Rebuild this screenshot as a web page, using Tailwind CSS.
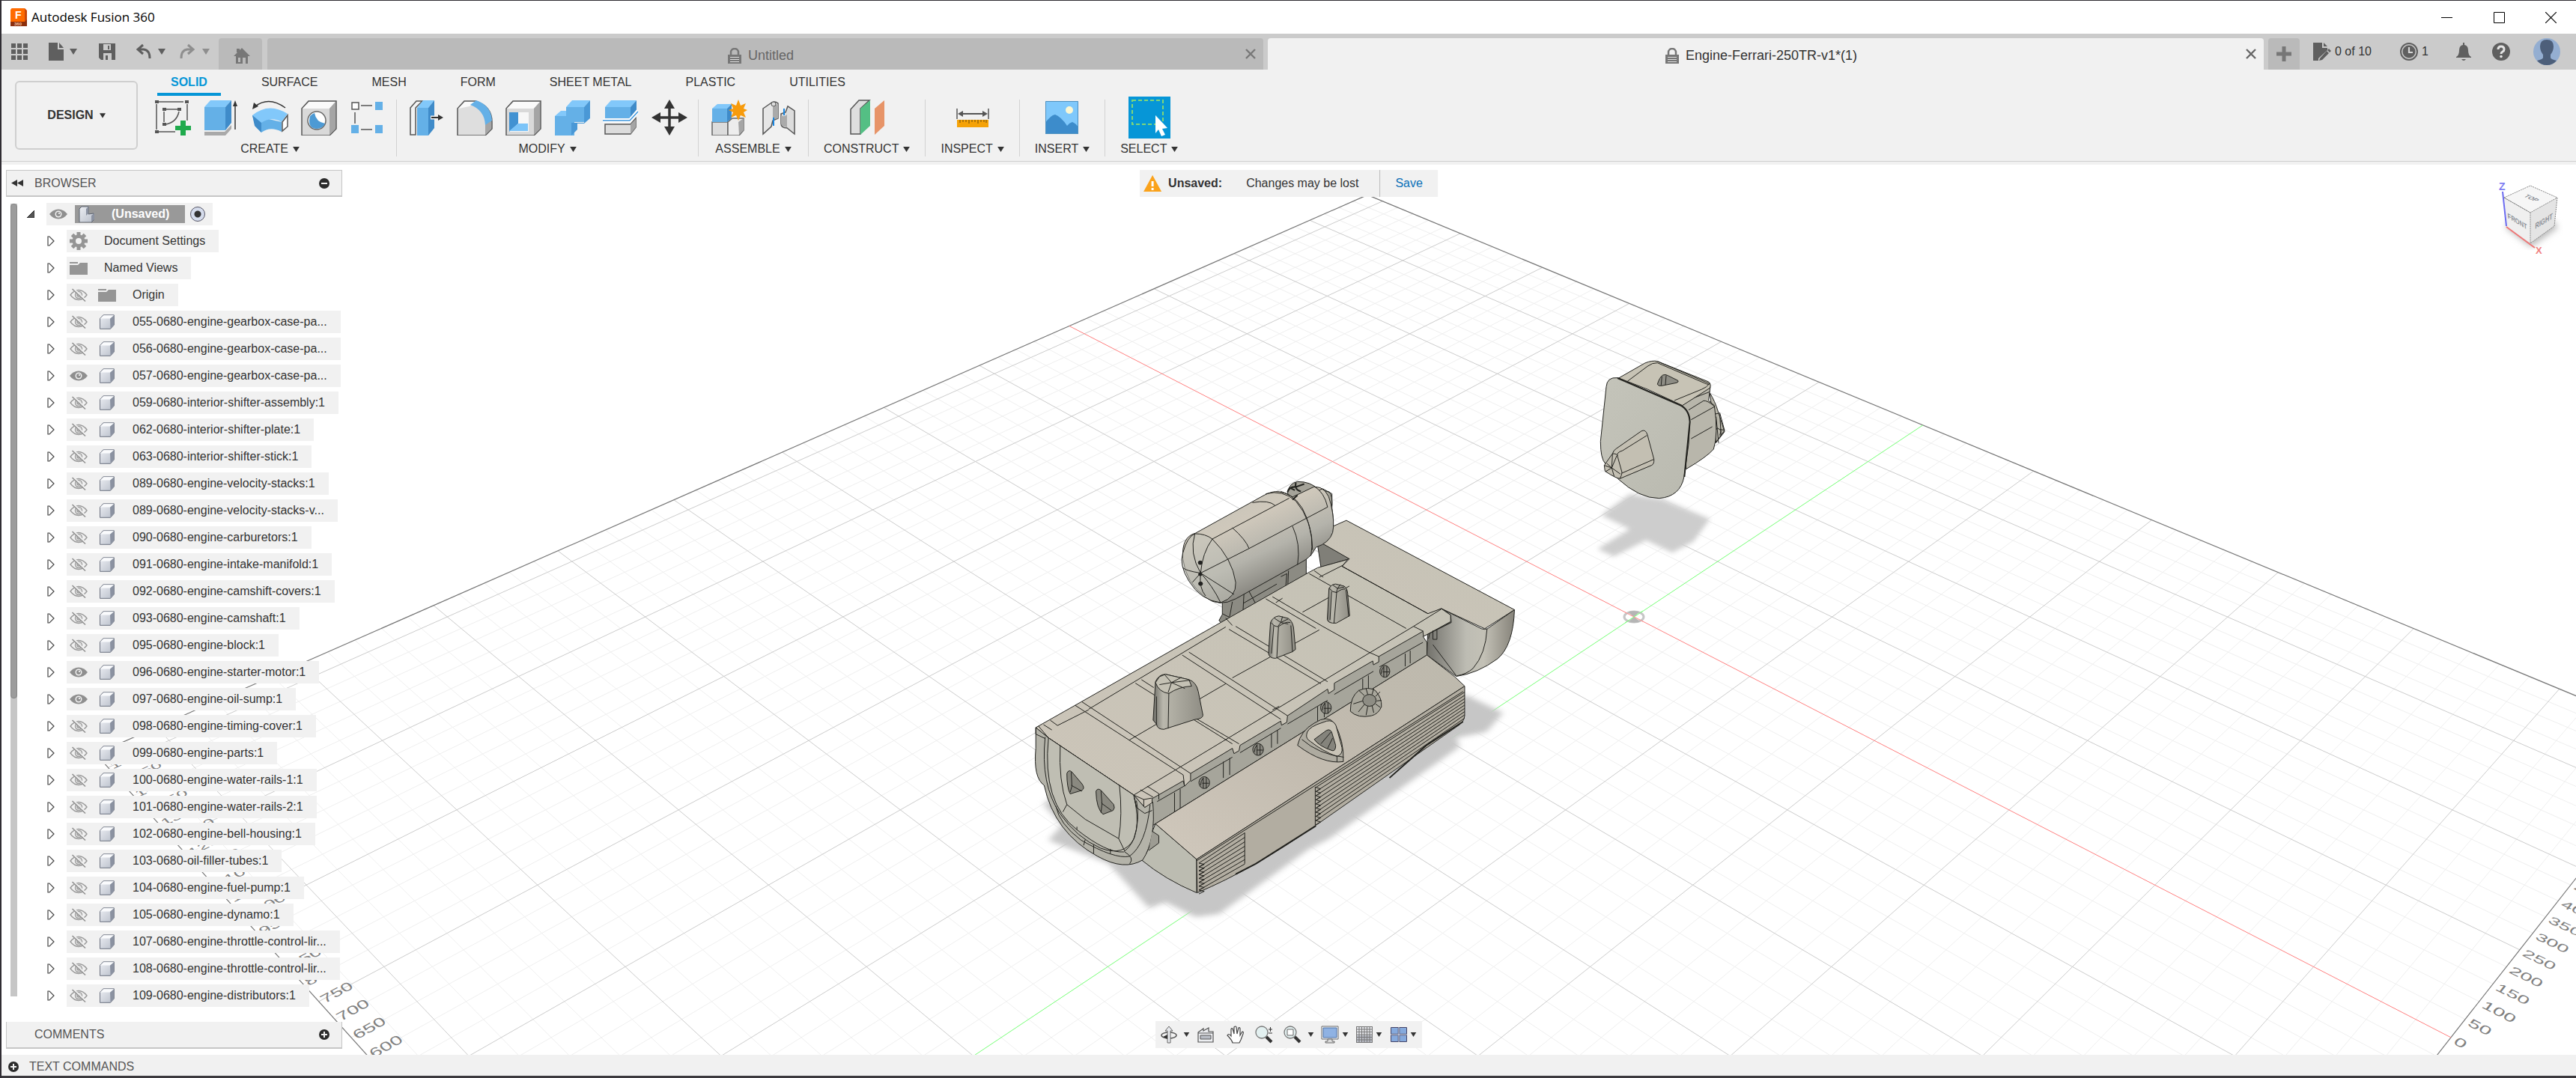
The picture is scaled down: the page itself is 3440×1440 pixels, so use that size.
<!DOCTYPE html>
<html lang="en">
<head>
  <meta charset="UTF-8" />
  <meta name="viewport" content="width=device-width, initial-scale=1" />
  <title>Autodesk Fusion 360</title>
  <script src="https://cdn.jsdelivr.net/npm/@tailwindcss/browser@4"></script>
  <style>
    body {
      font-family: 'Liberation Sans', Arial, sans-serif;
    }
    .title-font {
      font-family: 'Open Sans', 'Noto Sans', sans-serif;
    }
    .ln {
      fill: none;
      stroke: #23231f;
      stroke-width: 1;
    }
    .ln, .ln * {
      vector-effect: non-scaling-stroke;
    }
  </style>
</head>
<body class="h-screen flex flex-col overflow-hidden bg-white text-base text-[#333] border-t border-l-2 border-[#302d33]">

  <!-- shared icons -->
  <svg class="absolute w-0 h-0" aria-hidden="true">
    <defs>
      <linearGradient id="cubeGrad" x1="0" y1="0" x2="1" y2="1">
        <stop offset="0" stop-color="#eceef3" /><stop offset="1" stop-color="#b9bfca" />
      </linearGradient>
      <symbol id="i-caret" viewBox="0 0 10 8"><path d="M0 0h10L5 8z" fill="currentColor" /></symbol>
      <symbol id="i-eye" viewBox="0 0 24 14">
        <path d="M0 7Q5 .5 12 .5T24 7Q19 13.500 12 13.500T0 7z" fill="#8f8f8f" />
        <circle cx="12" cy="7" r="4.500" fill="#f1f1f1" /><circle cx="12" cy="7" r="3" fill="#8f8f8f" /><circle cx="13" cy="6" r="1" fill="#fff" />
      </symbol>
      <symbol id="i-eye-off" viewBox="0 0 24 18">
        <g fill="none" stroke="#9b9b9b" stroke-width="1.400">
          <path d="M1 9Q6 2.500 12 2.500T23 9Q18 15.500 12 15.500T1 9z" />
          <circle cx="12" cy="9" r="4.500" /><circle cx="12" cy="9" r="2" />
        </g>
        <path d="M4 0L22 17" stroke="#f1f1f1" stroke-width="3" /><path d="M3.500 1L21 17.500" stroke="#8f8f8f" stroke-width="1.500" />
      </symbol>
      <symbol id="i-cube" viewBox="0 0 20 20">
        <path d="M.5 5.500Q1 4.500 5 .8H19.300V14L14.500 19.300H.5z" fill="url(#cubeGrad)" stroke="#6c7280" />
        <path d="M14 5.500L19 1V14L14.500 19z" fill="#8b92a1" /><path d="M1 5.500L5.500 1.200H19L14 5.500z" fill="#fafbfd" />
      </symbol>
      <symbol id="i-folder" viewBox="0 0 24 17"><path d="M0 0h11v2H0zM0 4h11l3-3h10v16H0z" fill="#959595" /></symbol>
      <symbol id="i-gear" viewBox="-12 -12 24 24">
        <g fill="#959595">
          <g id="teeth"><rect x="-2.500" y="-12" width="5" height="24" /><rect x="-12" y="-2.500" width="24" height="5" /></g>
          <use href="#teeth" transform="rotate(45)" /><circle r="8.500" />
        </g>
        <circle r="4" fill="#f1f1f1" />
      </symbol>
      <symbol id="i-tri" viewBox="0 0 10 14"><path d="M1 1h2l6 6-6 6H1z" fill="#fff" stroke="#444" stroke-width="1.200" /></symbol>
      <symbol id="i-lock" viewBox="0 0 18 21">
        <path d="M4 9V6a5 5 0 0 1 10 0v3" fill="none" stroke="currentColor" stroke-width="2.500" />
        <rect y="9" width="18" height="12" fill="currentColor" /><path d="M3 12.500h12M3 15.500h12M3 18.500h12" stroke="#ddd" />
      </symbol>
      <symbol id="i-plus" viewBox="0 0 14 14"><circle cx="7" cy="7" r="7" fill="#2b2b2b" /><path d="M3 7h8M7 3v8" stroke="#f1f1f1" stroke-width="2" /></symbol>
      <symbol id="i-minus" viewBox="0 0 14 14"><circle cx="7" cy="7" r="7" fill="#2b2b2b" /><path d="M3 7h8" stroke="#f1f1f1" stroke-width="2" /></symbol>
      <symbol id="i-x" viewBox="0 0 14 14"><path d="M1 1l12 12M13 1L1 13" stroke="currentColor" stroke-width="2.400" /></symbol>
    </defs>
  </svg>

  <!-- title bar -->
  <header class="h-11 shrink-0 flex items-center bg-white">
    <svg class="ml-3 w-[22px] h-6" viewBox="0 0 22 24">
      <path d="M2 0h17l3 3v21H0V3z" fill="#c9480a" /><path d="M2 0h17v18H0V2z" fill="#ff6b00" /><path d="M0 18h19l3-3v9H0z" fill="#8c2f0d" />
      <text x="6" y="14" font-size="14" font-weight="bold" fill="#fff">F</text><text x="5" y="23" font-size="6" font-weight="bold" fill="#f3c4a8">360</text>
    </svg>
    <h1 class="title-font ml-[6px] text-[17px] leading-6 text-black">Autodesk Fusion 360</h1>
    <div class="ml-auto flex">
      <button aria-label="Minimize" class="w-[70px] h-11 grid place-items-center"><svg class="w-[15px] h-[15px]" viewBox="0 0 15 15"><path d="M0 7.500h15" stroke="#000" /></svg></button>
      <button aria-label="Maximize" class="w-[70px] h-11 grid place-items-center"><svg class="w-[15px] h-[15px]" viewBox="0 0 15 15"><path d="M.5 .5h14v14H.5z" fill="none" stroke="#000" /></svg></button>
      <button aria-label="Close" class="w-[68px] h-11 grid place-items-center"><svg class="w-[15px] h-[15px]" viewBox="0 0 15 15"><path d="M0 0l15 15M15 0L0 15" stroke="#000" stroke-width="1.200" /></svg></button>
    </div>
  </header>

  <!-- document tabs -->
  <nav class="h-12 shrink-0 flex items-end bg-[#cbcbcb] text-[#5f5f5f]">
    <div class="h-12 w-[290px] shrink-0 flex items-center pl-[13px]">
      <button aria-label="Data panel"><svg class="w-[22px] h-[22px]" viewBox="0 0 22 22"><path d="M0 0h6v6H0zM8 0h6v6H8zM16 0h6v6h-6zM0 8h6v6H0zM8 8h6v6H8zM16 8h6v6h-6zM0 16h6v6H0zM8 16h6v6H8zM16 16h6v6h-6z" fill="currentColor" /></svg></button>
      <button aria-label="File" class="ml-7 flex items-center gap-2">
        <svg class="w-5 h-6" viewBox="0 0 20 24"><path d="M0 0h12v9h8v15H0zM14 0l6 7h-6z" fill="currentColor" /></svg>
        <svg class="w-[10px] h-2"><use href="#i-caret" /></svg>
      </button>
      <button aria-label="Save" class="ml-[29px]"><svg class="w-[22px] h-[22px]" viewBox="0 0 22 22"><path d="M0 0h22v22H3L0 19z" fill="currentColor" /><path d="M6 1h10v8H6zM6 13h11v9H6z" fill="#cbcbcb" /><path d="M12 3h2v5h-2zM9 16h3v6H9z" fill="currentColor" /></svg></button>
      <button aria-label="Undo" class="ml-7 flex items-center gap-2">
        <svg class="w-[21px] h-[22px]" viewBox="0 0 21 22"><path d="M9 2L2 8l7 6M2 8h8q8 1 8 12" fill="none" stroke="currentColor" stroke-width="3" /></svg>
        <svg class="w-[10px] h-2"><use href="#i-caret" /></svg>
      </button>
      <button aria-label="Redo" class="ml-[18px] flex items-center gap-[10px] text-[#8e8e8e]">
        <svg class="w-[21px] h-[22px]" viewBox="0 0 21 22"><path d="M12 2l7 6-7 6M19 8h-8q-8 1-8 12" fill="none" stroke="currentColor" stroke-width="3" /></svg>
        <svg class="w-[10px] h-2"><use href="#i-caret" /></svg>
      </button>
    </div>
    <button aria-label="Home" class="h-[42px] w-[58px] shrink-0 grid place-items-center rounded-t bg-[#bababa] pl-1 text-[#777]">
      <svg class="w-[22px] h-[22px] mt-1" viewBox="0 0 22 22"><path d="M11 1l11 11h-3v10H3V12H0zM4 2h4v5H4z" fill="currentColor" /><path d="M6 14h3v6H6zM12 14h4v8h-4z" fill="#bababa" /></svg>
    </button>
    <div class="ml-[7px] h-[42px] flex-1 flex items-center rounded-t bg-[#bababa] text-lg leading-6 text-[#666]">
      <button class="flex-1 flex items-center justify-center gap-[9px] pl-4 mt-1"><svg class="w-[18px] h-[21px] text-[#777]"><use href="#i-lock" /></svg>Untitled</button>
      <button aria-label="Close Untitled" class="mr-[6px] p-1 text-[#777]"><svg class="w-[14px] h-[14px]"><use href="#i-x" /></svg></button>
    </div>
    <div class="ml-[6px] h-[42px] flex-1 flex items-center rounded-t bg-[#f1f1f1] text-lg leading-6 text-[#333]">
      <button class="flex-1 flex items-center justify-center gap-[9px] pl-4 mt-1"><svg class="w-[18px] h-[21px] text-[#777]"><use href="#i-lock" /></svg>Engine-Ferrari-250TR-v1*(1)</button>
      <button aria-label="Close Engine-Ferrari-250TR-v1" class="mr-[6px] p-1 text-[#666]"><svg class="w-[14px] h-[14px]"><use href="#i-x" /></svg></button>
    </div>
    <button aria-label="New design" class="ml-[6px] h-[42px] w-[42px] shrink-0 grid place-items-center rounded-t bg-[#bababa]"><svg class="w-5 h-5" viewBox="0 0 20 20"><path d="M0 10h20M10 0v20" stroke="#777" stroke-width="5" /></svg></button>
    <div class="h-12 w-[369px] shrink-0 flex items-center pl-[18px] text-[#333]">
      <button class="w-[116px] flex items-center gap-[5px]">
        <svg class="w-6 h-6" viewBox="0 0 24 24"><path d="M0 0h12v7h7v3L7 21v3H0zM14 0l5 5h-5z" fill="#5f5f5f" /><path d="M9 21l9-10 3 3-9 9-4 1zM19 10l2-2 3 3-2 2z" fill="#5f5f5f" /></svg>0 of 10
      </button>
      <button class="w-[75px] flex items-center gap-[5px]">
        <svg class="w-6 h-6" viewBox="0 0 24 24"><circle cx="12" cy="12" r="11" fill="none" stroke="#5f5f5f" stroke-width="2" /><circle cx="12" cy="12" r="8.500" fill="#5f5f5f" /><path d="M12 6v7h5" fill="none" stroke="#d5d5d5" stroke-width="2.200" /></svg>1
      </button>
      <button aria-label="Notifications" class="w-12"><svg class="w-5 h-6" viewBox="0 0 20 24"><path d="M9 0h2v3q5 1 5 7 0 7 4 9v1H0v-1q4-2 4-9 0-6 5-7zM7 22h6q-3 4-6 0z" fill="#5f5f5f" /></svg></button>
      <button aria-label="Help" class="w-[55px]"><svg class="w-6 h-6" viewBox="0 0 24 24"><circle cx="12" cy="12" r="12" fill="#5f5f5f" /><path d="M8 9q0-4 4-4t4 4q0 2-2 3t-2 3" fill="none" stroke="#e4e4e4" stroke-width="3" /><circle cx="12" cy="18.500" r="1.800" fill="#e4e4e4" /></svg></button>
      <button aria-label="Account"><svg class="w-9 h-9" viewBox="0 0 36 36"><circle cx="18" cy="18" r="18" fill="#94aed1" /><path d="M18 2q9 0 9 9 0 6-4 11v4q0 2 8 4-5 6-13 6T5 30q8-2 8-4v-4Q9 17 9 11q0-9 9-9z" fill="#4d5f7a" /></svg></button>
    </div>
  </nav>

  <!-- ribbon -->
  <section class="h-[127px] shrink-0 flex bg-[#f1f1f1]">
    <div class="flex flex-1 h-[123px] border-b border-[#cfcfcf]">
      <button class="ml-[18px] mt-[15px] h-[92px] w-[164px] flex items-center justify-center gap-2 rounded-md border-2 border-[#cfcfcf] font-bold">DESIGN <svg class="w-2 h-[7px]"><use href="#i-caret" /></svg></button>
      <div class="ml-2">
        <div class="ml-[18px] h-[35px] flex gap-9">
          <button class="px-[18px] pt-[2px] border-b-4 border-[#0696d7] font-bold text-[#0696d7]">SOLID</button>
          <button class="px-[18px] pb-[2px]">SURFACE</button>
          <button class="px-[18px] pb-[2px]">MESH</button>
          <button class="px-[18px] pb-[2px]">FORM</button>
          <button class="px-[18px] pb-[2px]">SHEET METAL</button>
          <button class="px-[18px] pb-[2px]">PLASTIC</button>
          <button class="px-[18px] pb-[2px]">UTILITIES</button>
        </div>
        <div class="mt-[5px] h-[76px] flex divide-x divide-[#d2d2d2]">

          <div class="px-[6px] flex flex-col">
            <div class="flex">
              <button aria-label="Create sketch" class="w-[65px] grid place-items-center"><svg class="w-12 h-12" viewBox="0 0 48 48">
                <path d="M5 3h33M2 6v34M5 43h22M43 6v22M15 13h15M12 16v14M32 16q-3 14-17 17" fill="none" stroke="#555" stroke-width="1.500" />
                <path d="M0 1h5v4H0zM40 1h5v4h-5zM0 41h5v4H0zM10 11h5v4h-5zM30 11h5v4h-5zM10 31h5v4h-5z" fill="#555" />
                <path d="M34 28h7v7h7v6h-7v7h-7v-7h-7v-6h7z" fill="#1faa4c" /></svg></button>
              <button aria-label="Extrude" class="w-[65px] grid place-items-center"><svg class="w-12 h-12" viewBox="0 0 48 48">
                <path d="M1 43h27l9-9v5l-8 9H1z" fill="#a9a9a9" /><path d="M1 10h28v31H1z" fill="#64b0e7" /><path d="M1 10L9 1h28l-8 9z" fill="#82c8fa" /><path d="M29 10l8-9v30l-8 10z" fill="#3f8bc9" />
                <path d="M42 40V6" stroke="#333" stroke-width="1.500" /><path d="M42 1l3 8h-6z" fill="#333" /></svg></button>
              <button aria-label="Revolve" class="w-[65px] grid place-items-center"><svg class="w-12 h-12" viewBox="0 0 48 48">
                <path d="M0 21L4 36l8 8q12-9 27-1V30z" fill="#64b0e7" /><path d="M0 21Q22 3 47 19l-8 11q-14-8-27 1z" fill="#82c8fa" /><path d="M0 21l12 10v13l-9-9z" fill="#3f8bc9" />
                <path d="M40 30l7-9v15l-7 6z" fill="#fff" stroke="#555" stroke-width="1.500" /><path d="M44 11Q22-5 4 9" fill="none" stroke="#333" stroke-width="1.500" /><path d="M0 13l2-9 6 5z" fill="#333" /></svg></button>
              <button aria-label="Hole" class="w-[65px] grid place-items-center"><svg class="w-12 h-12" viewBox="0 0 48 48">
                <path d="M1 12l9-10h37v37l-9 9H1z" fill="#d9d9d9" stroke="#555" stroke-width="1.500" /><path d="M2 12l9-9h35l-8 9z" fill="#fafafa" /><path d="M38 12l8-9v36l-8 8z" fill="#a5a5a5" />
                <circle cx="21" cy="28" r="12" fill="#fff" stroke="#666" stroke-width="1.500" /><path d="M18 18q2 12 14 14-3 7-11 7-10 0-10-11 0-8 7-10z" fill="#4d9ad4" /></svg></button>
              <button aria-label="Rectangular pattern" class="w-[65px] grid place-items-center"><svg class="w-12 h-12" viewBox="0 0 48 48">
                <path d="M3 4h9v9H3z" fill="#fff" stroke="#555" stroke-width="1.500" /><path d="M34 3h10v11H34zM2 34h10v11H2zM34 34h10v11H34z" fill="#64b0e7" /><path d="M15 8h15M7 17v15M15 40h15" stroke="#555" stroke-width="1.500" /></svg></button>
            </div>
            <button class="mt-auto h-5 flex items-center justify-center gap-[6px]">CREATE <svg class="w-[9px] h-[7px]"><use href="#i-caret" /></svg></button>
          </div>

          <div class="px-[6px] flex flex-col">
            <div class="flex">
              <button aria-label="Press pull" class="w-[65px] grid place-items-center"><svg class="w-12 h-12" viewBox="0 0 48 48">
                <path d="M3 11l8-9h8l-9 9v36H3z" fill="#f3f3f3" stroke="#555" stroke-width="1.500" /><path d="M12 11h15v37H12z" fill="#64b0e7" /><path d="M12 11l8-10h15l-8 10z" fill="#82c8fa" /><path d="M27 11l8-10v37l-8 10z" fill="#3f8bc9" />
                <path d="M30 24h12" stroke="#f1f1f1" stroke-width="5" /><path d="M31 24h10" stroke="#333" stroke-width="2" /><path d="M40 20l7 4-7 4z" fill="#333" /></svg></button>
              <button aria-label="Fillet" class="w-[65px] grid place-items-center"><svg class="w-12 h-12" viewBox="0 0 48 48">
                <path d="M1 12l9-10h15q22 7 22 28v9l-9 9H1z" fill="#dedede" stroke="#555" stroke-width="1.500" /><path d="M38 33l8-6v12l-8 8z" fill="#a5a5a5" /><path d="M2 12l9-9h14l-8 6z" fill="#fafafa" /><path d="M18 7l8-6q20 7 21 27l-9 6Q37 14 18 7z" fill="#64b0e7" /></svg></button>
              <button aria-label="Shell" class="w-[65px] grid place-items-center"><svg class="w-12 h-12" viewBox="0 0 48 48">
                <path d="M1 12l9-10h37v37l-9 9H1z" fill="#d9d9d9" stroke="#555" stroke-width="1.500" /><path d="M2 12l9-9h35l-8 9z" fill="#fafafa" /><path d="M38 12l8-9v36l-8 8z" fill="#a5a5a5" />
                <path d="M5 17h26v26H5z" fill="#f7f7f7" /><path d="M5 17h12v15L5 43z" fill="#4292d2" /><path d="M17 32h13v10H5z" fill="#7cc4f8" /></svg></button>
              <button aria-label="Combine" class="w-[65px] grid place-items-center"><svg class="w-12 h-12" viewBox="0 0 48 48">
                <path d="M1 22h15V10h24v20H27v18H1z" fill="#64b0e7" /><path d="M1 22l8-7h7v-5l8-9h24l-8 9H16v12z" fill="#82c8fa" /><path d="M40 10l8-9v24l-8 7H31v8l-8 8V31h17z" fill="#4a98d6" /></svg></button>
              <button aria-label="Split body" class="w-[65px] grid place-items-center"><svg class="w-12 h-12" viewBox="0 0 48 48">
                <path d="M3 33h34l7-8v12l-7 9H3z" fill="#dcdcdc" stroke="#555" stroke-width="1.500" /><path d="M37 33l7-7v11l-7 9z" fill="#a5a5a5" /><path d="M3 10h34v15H3z" fill="#64b0e7" /><path d="M3 10l8-9h34l-8 9z" fill="#82c8fa" /><path d="M37 10l8-9v14l-8 10z" fill="#3f8bc9" /><path d="M0 28h36l11-13" fill="none" stroke="#fff" stroke-width="5" /><path d="M0 28h36l11-12" fill="none" stroke="#3b95dd" stroke-width="1.500" /></svg></button>
              <button aria-label="Move" class="w-[65px] grid place-items-center"><svg class="w-12 h-12" viewBox="0 0 48 48">
                <path d="M24 8v32M8 24h32" stroke="#333" stroke-width="3.500" /><path d="M24 0l7 12H17zM24 48l7-12H17zM0 24l12-7v14zM48 24l-12-7v14z" fill="#333" /></svg></button>
            </div>
            <button class="mt-auto h-5 flex items-center justify-center gap-[6px]">MODIFY <svg class="w-[9px] h-[7px]"><use href="#i-caret" /></svg></button>
          </div>

          <div class="px-2 flex flex-col">
            <div class="flex">
              <button aria-label="New component" class="w-[65px] grid place-items-center"><svg class="w-12 h-12" viewBox="0 0 48 48">
                <path d="M1 30h21v18H1z" fill="#dcdcdc" stroke="#666" stroke-width="1.500" /><path d="M22 30l6-5h15v16l-6 7H22z" fill="#ededed" stroke="#666" stroke-width="1.500" /><path d="M36 30l7-5v16l-6 6z" fill="#a5a5a5" />
                <path d="M1 12h20v18H1z" fill="#64b0e7" /><path d="M1 12l7-6h19l-6 6z" fill="#82c8fa" /><path d="M21 12l6-6v19l-6 5z" fill="#3f8bc9" />
                <path d="M36 0l3 8 7-3-3 7 5 2-5 3 3 7-7-3-3 7-3-7-7 3 3-7-6-3 6-2-3-7 7 3z" fill="#f79b0c" /></svg></button>
              <button aria-label="Joint" class="w-[65px] grid place-items-center"><svg class="w-12 h-12" viewBox="0 0 48 48">
                <path d="M4 12L14 5q5-4 10 0v20l-7 3-2 8L4 46z" fill="#e6e6e6" stroke="#555" stroke-width="1.500" /><path d="M17 10q4-4 7-4v19l-7 2z" fill="#aaa" /><circle cx="18" cy="6" r="3" fill="#ddd" stroke="#555" />
                <path d="M46 46L36 38q-8 0-8-6V19l6-2 3-8 9 6z" fill="#dcdcdc" stroke="#555" stroke-width="1.500" /><path d="M28 21q4 3 8-1v17q-8-1-8-5z" fill="#aaa" /><path d="M18 24v11M32 12v9" stroke="#1a86e0" stroke-width="2" /></svg></button>
            </div>
            <button class="mt-auto h-5 flex items-center justify-center gap-[6px]">ASSEMBLE <svg class="w-[9px] h-[7px]"><use href="#i-caret" /></svg></button>
          </div>

          <div class="px-5 flex flex-col">
            <button aria-label="Offset plane" class="grid place-items-center"><svg class="w-12 h-12" viewBox="0 0 48 48">
              <path d="M2 13L13 1h14L15 12v34H2z" fill="#dedede" stroke="#555" stroke-width="1.500" /><path d="M15 12L28 1v34L15 47z" fill="#54bf84" /><path d="M34 12L47 1v34L34 47z" fill="#e79468" /></svg></button>
            <button class="mt-auto h-5 flex items-center justify-center gap-[6px]">CONSTRUCT <svg class="w-[9px] h-[7px]"><use href="#i-caret" /></svg></button>
          </div>

          <div class="px-5 flex flex-col">
            <button aria-label="Measure" class="grid place-items-center"><svg class="w-12 h-12" viewBox="0 0 48 48">
              <path d="M3 12v14M45 12v14" stroke="#555" stroke-width="1.500" /><path d="M8 19h32" stroke="#555" stroke-width="2" /><path d="M4 19l7-4v8zM44 19l-7-4v8z" fill="#555" />
              <path d="M3 27h42v10H3z" fill="#f5a207" /><path d="M7 27v4M11 27v3M15 27v3M19 27v5M23 27v3M27 27v3M31 27v5M35 27v3M39 27v3M42 27v4" stroke="#6b4a08" /></svg></button>
            <button class="mt-auto h-5 flex items-center justify-center gap-[6px]">INSPECT <svg class="w-[9px] h-[7px]"><use href="#i-caret" /></svg></button>
          </div>

          <div class="px-5 flex flex-col">
            <button aria-label="Insert canvas" class="grid place-items-center"><svg class="w-12 h-12" viewBox="0 0 48 48">
              <path d="M2 2h44v44H2z" fill="#7fc8fb" /><path d="M2 31q7-10 13-11 8 3 16 15 3-4 7-5 5 2 8 7v9H2z" fill="#3d8ccb" /><circle cx="34" cy="14" r="5" fill="#fbf7d4" /><path d="M2.500 2.500h43v43h-43z" fill="none" stroke="#4d90c0" /></svg></button>
            <button class="mt-auto h-5 flex items-center justify-center gap-[6px]">INSERT <svg class="w-[9px] h-[7px]"><use href="#i-caret" /></svg></button>
          </div>

          <div class="px-5 flex flex-col">
            <button aria-label="Select" class="-mt-1 h-14 w-14 self-center grid place-items-center bg-[#0696d7]"><svg class="w-14 h-14" viewBox="0 0 56 56">
              <path d="M5 5h41v32H5z" fill="none" stroke="#7fd67a" stroke-width="2" stroke-dasharray="5 3" /><path d="M36 25l16 17-7 1 4 8-5 2-4-9-4 5z" fill="#fff" /></svg></button>
            <button class="mt-auto h-5 flex items-center justify-center gap-[6px]">SELECT <svg class="w-[9px] h-[7px]"><use href="#i-caret" /></svg></button>
          </div>
        </div>
      </div>
    </div>
  </section>

  <!-- viewport -->
  <main class="relative flex-1 min-h-0 overflow-hidden bg-white">
    <svg class="absolute inset-0 w-full h-full" viewBox="2 220 3438 1189" preserveAspectRatio="xMidYMid slice">
      <defs>
        <filter id="soft" x="-20%" y="-20%" width="140%" height="140%"><feGaussianBlur stdDeviation="9" /></filter>
        <linearGradient id="motor" x1="0" y1="0" x2=".6" y2="1">
          <stop offset=".1" stop-color="#c4c2b8" /><stop offset=".4" stop-color="#cfc8bb" /><stop offset=".65" stop-color="#b4b3ab" /><stop offset="1" stop-color="#6f6d67" />
        </linearGradient>
        <linearGradient id="bell" x1="0" y1="0" x2="1" y2="0">
          <stop offset="0" stop-color="#73726c" /><stop offset=".45" stop-color="#bdbcb3" /><stop offset=".65" stop-color="#c3c1b6" /><stop offset="1" stop-color="#86837a" />
        </linearGradient>
        <linearGradient id="pan" x1="0" y1="1" x2="1" y2="0">
          <stop offset="0" stop-color="#d0c8bc" /><stop offset=".5" stop-color="#c2bbaf" /><stop offset="1" stop-color="#bdb9ad" />
        </linearGradient>
        <linearGradient id="deck" x1="0" y1="1" x2="1" y2="0">
          <stop offset="0" stop-color="#ccc5b9" /><stop offset="1" stop-color="#c4c2b5" />
        </linearGradient>
        <linearGradient id="post" x1="0" y1="0" x2="1" y2="0">
          <stop offset="0" stop-color="#6f6e68" /><stop offset=".2" stop-color="#bab8ad" /><stop offset="1" stop-color="#8f8d84" />
        </linearGradient>
        <linearGradient id="plate" x1="0" y1="0" x2="1" y2="1"><stop offset="0" stop-color="#c4c4ba" /><stop offset="1" stop-color="#babab0" /></linearGradient>
      </defs>

      <g id="grid"></g>
      <g id="labels" fill="#808080"></g>

      <!-- origin marker -->
      <ellipse cx="2182" cy="824" rx="13" ry="7" fill="#fff" fill-opacity=".6" stroke="#c6c6c6" stroke-width="3" />
      <path d="M2182 824l-8-6a13 8 0 0 1 15 0zM2182 824l-7 6a13 8 0 0 0 15 0z" fill="#b5b5b5" />
      <path d="M2170 817.800L2194 830.200" stroke="#ff8f8f" /><path d="M2170 832L2194 816" stroke="#7dff7d" />

      <!-- gearbox case -->
      <g transform="translate(2100 450) scale(.3333)">
        <path d="M230 630L115 715 230 770 100 850 165 880 295 815 400 865 485 820 550 730 360 650z" fill="#cdcdcd" filter="url(#soft)" />
        <g class="ln">
          <path d="M550 225q20 30 35 80l24 75-35 45z" fill="#b7b5a9" />
          <path d="M568 310l22-5 19 70-35 48zM575 320l10 105M590 310l5 85M570 380l10-15 15 10-5 20M592 370l17 5" />
          <path d="M455 530Q540 480 565 450 585 390 568 275L545 255 552 200 435 275z" fill="#b8b6ab" />
          <path d="M475 332l93-52M475 408l85-48M465 293l60-37q15-2 43 22M440 262l110-42" />
          <path d="M185 165L290 105q30-12 50-7L545 180q12 10 5 25L440 275 300 210z" fill="#c7c3b5" />
          <path d="M220 178l80-60q20-15 40-14L535 188q10 3 13 3M408 255l110-45q20-8 30-22M340 98l210 90" />
          <path d="M340 190q8-28 22-37 10-4 20 2l40 20q5 5-5 9l-60 12q-14 2-17-6z" fill="#8e8d85" /><path d="M358 158l-3 36M375 155l-3 37" />
          <path d="M135 200q3-40 45-36L430 272q38 18 40 68l-5 90-18 130q-15 80-100 87-80 0-165-78l-50-60q-20-20-20-90z" fill="url(#plate)" />
          <path d="M180 165L430 273q38 18 40 68l-22 220" stroke-width="2" />
          <path d="M127 515L160 468q5-15 15-20L275 378q18-10 25 15l26 97q2 20-10 25L190 568q-15 0-60-30z" fill="#c3bfb2" />
          <path d="M160 468q20 0 20 10l18 65q0 10-8 24M160 470l-3 55M157 525l-30-10M157 525l-20-18M157 525l20-48M157 525l35 25M157 525l-25 15M157 525l10 35M180 478q-5-15 20-22L298 395M198 546l127-55" />
        </g>
      </g>

      <!-- engine block, sump and starter motor -->
      <g transform="translate(1360 620) scale(.4464 .3954)">
        <path d="M95 1130L75 1150 130 1220 90 1270 270 1350 390 1500 440 1480 530 1530 600 1520 870 1300 930 1265 1320 955 1310 925 1400 905 1450 840 1340 780 600 1000z" fill="#c6c6c6" filter="url(#soft)" />
        <g class="ln" id="engine">
          <!-- motor bracket -->
          <path d="M610 460v48l-10 20 6 8 255-160v-75z" fill="#8c8b83" />
          <path d="M610 505q15 10 22 12M640 465l-8 50M675 430l-3 65M673 470l100-65M690 430l18 38M785 380l18-10-3 40M808 360l-2 45" />
          <!-- bell housing -->
          <path d="M893 258l12 90 85-28-18-15z" fill="#807f78" />
          <path d="M900 262L941 210 981 190 1484 492 1395 556 1265 488 1225 508 968 345 990 320z" fill="url(#deck)" />
          <path d="M1484 492q-4 120-50 165-60 50-124 60l-88-72 2-70 71-40-2-25-28-22 120 68q10 4 18 0z" fill="url(#bell)" />
          <path d="M1402 556q-4 85-42 134-20 20-48 25M1240 610l70 105" />
          <!-- wall under the deck -->
          <path d="M378 1160L400 1090 1280 500 1293 535l-83 47 12 20v43L410 1215 395 1225z" fill="#a6a59b" />
          <!-- deck -->
          <path d="M52 890L188 803 870 365 895 350 985 322 968 345 1225 505 1265 488 1293 510 1293 532 1212 582 1210 565 1078 650 1078 668 1062 678 1060 665 945 740 945 762 928 775 925 760 805 850 803 872 787 882 785 868 663 950 660 968 645 978 640 960 515 1045 515 1068 497 1088 493 1070 400 1130 400 1150 378 1160 345 1118 90 925z" fill="url(#deck)" />
          <path d="M415 1140L495 1088M515 1072L640 990M663 975L785 892M805 878L925 798M945 778L1062 700M1080 685L1210 602M1240 562v30h12v-32M1230 572l-3 18" />
          <path d="M467 1110v65M484 1098v66M613 1005v55M632 993v57M757 910v48M775 898v47M895 820v47M915 808v47M1030 725v50M1047 714v49M1157 640v43M1172 630v43" />
          <path d="M60 885L90 925 345 1118M345 1118L1182 548M345 1118l30 15 25-5M375 1133v27M95 865l22 18M75 880l25 18M117 883L210 830M365 1100l38 25M385 1088l35 25v20" />
          <path d="M170 815L493 1050 497 1088M190 803L515 1045M210 828L620 550M350 740L640 945M368 728L405 755M525 855L660 945M490 645L785 862M510 635L805 850M630 558L905 742M650 548L925 735M620 520L640 545M740 455L890 555M760 448L910 548M870 370L1160 555M885 360L912 382M770 468l20-15M900 382l70-40M968 345L1225 505" />
          <path d="M332 932L620 742M640 722L900 560M910 548L1048 635 1078 650M850 500L990 412M1182 548L1212 565M1182 548L1265 490M760 830l20-12" />
          <!-- deck posts -->
          <path d="M403 865l7-130q10-25 30-25l70 18q22 8 28 40l14 80q0 12-25 15l-92 33q-20 0-22-18z" fill="url(#post)" />
          <path d="M410 738l12-20 18-8 70 18 8 22q-38 2-68 25-30-5-40-37z" fill="#c4c1b4" />
          <path d="M450 773l-2 120M413 785v95M422 745l35-7M458 738l-20-26M458 738l30-18M458 738l55-8M458 738l40 20M458 738l-10 33" />
          <path d="M748 640l6-105q8-20 25-22l28 8q12 8 16 30l6 75-10 8-50 22q-18 0-21-16z" fill="url(#post)" />
          <path d="M756 535q8 14 22 14 20-18 35-14M778 549l-5 105M764 545l-7 95M815 545l5 90M785 535l-20-15M785 535l5-20M785 535l22-12M785 535l22 5M785 535l-8 12" />
          <path d="M924 525l5-105q7-14 20-15l25 7q10 7 11 25l6 75-40 25q-25 2-27-12z" fill="url(#post)" />
          <path d="M930 420q10 14 22 14 15-14 26-12M952 434l-8 103M937 430l-5 96M980 425l8 90M955 420l-15-12M955 420l8-14M955 420l20-5M955 420l-4 13" />
          <!-- oil pan -->
          <path d="M410 1215L533 1335v113q-95-45-165-111 32-40 34-100z" fill="#bcbcb1" />
          <path d="M410 1215L1222 645 1305 718 1335 750 533 1335z" fill="url(#pan)" />
          <path d="M533 1335L1335 750v100q-2 18-15 30L1225 955 890 1220Q700 1370 535 1448z" fill="#b2ada1" />
          <path d="M533 1340L1330 768" />
          <g id="ribs"></g>
          <path d="M650 1385l60-35 180-128M1110 1060l110-110 110-80" stroke-width="2" />
          <!-- filler cap and drain -->
          <path d="M993 835q0-50 25-70 30-15 50 0 20 25 18 55-10 25-30 30-40 10-63-15z" fill="#a9a79c" /><circle cx="1050" cy="798" r="20" fill="#8e8d84" />
          <path d="M1035 782l-17-18M1045 778l-5-20M1058 778l5-20M1068 785l14-16M1072 800l14-2M1068 810l15 12M1058 816l5 24M1045 818l-5 30M1035 812l-18 25M1030 800l-28 10" />
          <path d="M835 950q10-50 50-75 40-30 60 0 30 60 27 130-60 10-137-55z" fill="#aeaba0" /><path d="M862 915q0-20 30-35l30-12q20-5 28 15l18 75q3 22-15 30-45-20-78-50-15-10-13-23z" fill="#c8c3b6" />
          <path d="M885 930l30-25q15-15 22 0l12 45q0 20-10 18-40-15-54-38z" fill="#85847c" /><path d="M905 945l30-40M925 960l15-35M848 930q50 50 125 60M953 988v18" />
          <!-- wall bolts -->
          <g fill="#8b8a82">
            <ellipse cx="556" cy="1076" rx="16" ry="20" /><ellipse cx="717" cy="964" rx="16" ry="20" /><ellipse cx="920" cy="823" rx="16" ry="20" /><ellipse cx="1096" cy="700" rx="15" ry="20" />
          </g>
          <path d="M545 1085q0-15 8-25v35M562 1058v38M706 973q0-15 8-25v35M723 946v38M909 832q0-15 8-25v35M926 805v38M1085 709q0-15 8-25v35M1102 682v38M550 1078h20M712 966h20M914 825h20M1090 702h20" />
          <!-- front cover -->
          <path d="M52 890v70q-8 100 25 125 30 160 160 240 80 50 135 12 40-70 30-195l-24 18-33-42L90 925z" fill="#b4b3a9" />
          <path d="M90 925q-20 220 85 310 90 80 140 75 60-50 30-192z" fill="#bfbeb3" />
          <path d="M52 890v22l28 15M80 922q-15 160 45 260 50 80 120 115 70 30 100-30 20-70 8-130M345 1118l8 42 25 20 22-10M125 950q-5 120 20 200l55 50 100 65q12-80 2-182M145 1150l-12 25M300 1265l18 42M353 1160l-5-30M112 1155q10 60 75 115 100 65 145 55 50-40 62-175M200 1268l-5 20M225 1285v30M275 1300v15M175 1225v10M318 1310q30 20 15 40" />
          <path d="M145 1045q5-15 15-5l30 40q10 15 0 22l-35 12q-10-20-10-69z" fill="#8a8980" /><path d="M158 1085l32 20M158 1040l2 48-5 20" />
          <path d="M232 1105q5-12 15-3l38 48q5 12-2 20l-30 13q-20-20-21-78z" fill="#8a8980" /><path d="M248 1145l30 25M247 1103l3 45-3 30" />
          <path d="M400 1240l20 15v25l-30 25" fill="#9d9c93" />
          <!-- starter motor -->
          <path d="M805 95q5-30 30-36 40 0 60 25l35 10q10 10 8 55 8 50-2 90l-50 30-60-90z" fill="#a5a399" />
          <path d="M492 320q-5-75 38-87L735 105q25-15 45-12 20 2 40 18l65-35q40 0 50 60 12 60 5 95-10 35-50 50l-8 15q-10 20-35 35L650 455q-50 30-90-5-60-50-68-130z" fill="url(#motor)" />
          <path d="M528 235Q560 235 580 253 640 320 650 400 652 450 605 468 545 460 510 395 480 340 492 300 505 245 528 235z" fill="#c2c2b9" fill-opacity=".55" />
          <path d="M545 368Q510 300 528 235M545 368Q550 300 580 253M545 368L690 285 925 145M545 368Q500 360 492 350M545 368Q520 400 520 400M545 368Q540 420 560 445M545 368Q580 410 605 468M545 368L645 440M580 253L810 115M640 215Q680 255 690 285M700 130Q750 120 768 140M740 100Q790 85 830 125 880 190 880 290M785 92Q840 110 862 180 885 250 875 310M820 210Q845 270 835 340M885 75q30 20 40 70M900 88l10-5 28 17v40" />
          <path d="M805 95q5-20 25-18l25-10M830 62q-5 25 15 30M812 80l15 8M820 120l15-15" stroke-width="2" />
          <circle cx="544" cy="333" r="6" fill="#222" /><circle cx="544" cy="372" r="5" fill="#222" /><circle cx="545" cy="404" r="6" fill="#222" />
        </g>
      </g>
    </svg>

    <!-- browser panel -->
    <aside class="absolute inset-y-0 left-[6px] w-[449px] pt-[7px] pb-2 flex flex-col pointer-events-none">
      <div class="h-9 shrink-0 flex items-center border border-b-2 border-[#c6c6c6] bg-[#f1f1f1] pl-[6px] pr-4 text-[#555]">
        <svg class="w-4 h-[9px]" viewBox="0 0 16 9"><path d="M8 0v9L0 4.500zM16 0v9L8 4.500z" fill="#333" /></svg>
        <h2 class="ml-[15px]">BROWSER</h2>
        <button aria-label="Collapse browser" class="ml-auto"><svg class="w-[14px] h-[14px]"><use href="#i-minus" /></svg></button>
      </div>
      <div class="mt-[5px] flex-1 min-h-0 flex">
        <div class="mt-1 ml-[6px] w-[9px] h-[1059px] shrink-0 bg-[#c6c6c6]"><div class="h-[661px] w-[9px] rounded-t rounded-b-sm border border-[#878787] bg-[#9c9c9c]"></div></div>
        <ul id="tree" class="flex-1 min-w-0 overflow-hidden">
          <li class="h-9 flex items-center">
            <svg class="ml-[13px] w-[10px] h-[10px]" viewBox="0 0 10 10"><path d="M10 0v10H0z" fill="#555" stroke="#222" /></svg>
            <div class="ml-4 h-[30px] w-[222px] flex items-center bg-[#f1f1f1] pl-1">
              <svg class="w-6 h-[14px]"><use href="#i-eye" /></svg>
              <label for="root" class="ml-[10px] h-6 w-[147px] flex items-center bg-[#999] pl-[5px] font-bold text-white">
                <svg class="w-[22px] h-[22px] mr-[22px]" viewBox="0 0 22 22"><path d="M1 4l3-3h9v10l7-1v9l-3 3H1z" fill="url(#cubeGrad)" stroke="#5d6470" /><path d="M10 4l3-3v9l-3 3zM17 13l4-3v8l-4 3z" fill="#8b92a1" /></svg>(Unsaved)
              </label>
              <input id="root" type="radio" checked class="ml-[7px] h-5 w-5 appearance-none rounded-full border border-[#556] bg-[radial-gradient(circle,#333_0_4px,#d5dcec_5px)]" />
            </div>
          </li>
        </ul>
      </div>
      <div class="h-9 shrink-0 flex items-center border border-t-0 border-b-2 border-[#c6c6c6] bg-[#f1f1f1] pl-[37px] pr-4 text-[#555]">
        <h2>COMMENTS</h2>
        <button aria-label="Expand comments" class="ml-auto"><svg class="w-[14px] h-[14px]"><use href="#i-plus" /></svg></button>
      </div>
    </aside>

    <!-- unsaved notice -->
    <div class="absolute top-[7px] left-1/2 -translate-x-1/2 h-9 flex items-center bg-[#f1f1f1] pl-[5px] whitespace-nowrap">
      <svg class="w-6 h-[22px]" viewBox="0 0 24 22"><path d="M12 0l12 22H0z" fill="#faa21b" /><path d="M12 8v7M12 17v3" stroke="#fff" stroke-width="3" /></svg>
      <strong class="ml-[9px]">Unsaved:</strong>
      <span class="ml-8 mr-7">Changes may be lost</span>
      <a href="#" class="h-9 flex items-center border-l border-[#bbb] px-5 text-[#0a70b8]">Save</a>
    </div>

    <!-- view cube -->
    <svg class="absolute top-[18px] right-4 w-24 h-28" viewBox="0 0 96 112" font-weight="bold">
      <defs><filter id="blurCube"><feGaussianBlur stdDeviation="4" /></filter></defs>
      <path d="M18 66l34 26 36-26-8-10H24z" fill="#bbb" filter="url(#blurCube)" />
      <path d="M16 26l35-16 36 16-36 20z" fill="#f6f6f6" /><path d="M16 26l35 20v41L20 66z" fill="#efefef" /><path d="M87 26L51 46v41l32-23z" fill="#e4e4e4" />
      <path d="M16 26l35-16 36 16-4 38-32 23V46zM16 26l35 20 36-20" fill="none" stroke="#888" stroke-dasharray="2 1" />
      <path d="M14 18l5 46" stroke="#6b6bf0" stroke-width="2" /><path d="M19 65l38 28" stroke="#ee7777" stroke-width="2" />
      <text x="9" y="16" font-size="14" fill="#7f7ff2">Z</text><text x="58" y="101" font-size="13" fill="#f08080">X</text>
      <g fill="#8b8f96" text-anchor="middle" font-size="10">
        <text transform="matrix(.8 .38 -.8 .42 50 28)">TOP</text><text transform="matrix(.75 .45 .1 1 34 61)">FRONT</text><text transform="matrix(.75 -.45 -.05 1.100 69 61)">RIGHT</text>
      </g>
    </svg>

    <!-- navigation bar -->
    <div class="absolute bottom-[9px] left-1/2 -translate-x-1/2 h-9 w-[356px] flex items-center bg-[#f1f1f1] pl-[7px] text-[#333]">
      <button aria-label="Orbit" class="w-[49px] flex items-center gap-2"><svg class="w-[22px] h-6" viewBox="0 0 22 24"><ellipse cx="11" cy="13" rx="10" ry="4" fill="none" stroke="#555" stroke-width="1.500" /><path d="M9 23V7H6l5-6 5 6h-3v16z" fill="#e8eaee" stroke="#666" /><path d="M3 15l6-3v6z" fill="#333" /></svg><svg class="w-[9px] h-[6px]"><use href="#i-caret" /></svg></button>
      <button aria-label="Look at" class="w-[39px]"><svg class="w-[22px] h-[22px]" viewBox="0 0 22 22"><path d="M1 8l7-5v3l7-4v5h6v14H1z" fill="#eceef1" stroke="#555" stroke-width="1.200" /><path d="M1 9h20" stroke="#555" /><path d="M4 12h14v5H4z" fill="#b8bcc5" stroke="#555" /></svg></button>
      <button aria-label="Pan" class="w-[38px]"><svg class="w-6 h-6" viewBox="0 0 24 24"><path d="M8 23q-1-4-7-10 2-3 5 1V5q0-2 2-1l2 7 0-9q2-2 3 0l1 9 2-8q2-1 2 1v9l3-5q2 0 1 3l-3 8-2 4z" fill="#fff" stroke="#444" stroke-width="1.200" /></svg></button>
      <button aria-label="Zoom" class="w-[38px]"><svg class="w-6 h-6" viewBox="0 0 24 24"><circle cx="9" cy="9" r="8" fill="#e3f0f0" stroke="#777" stroke-width="1.300" /><path d="M15 15l7 7" stroke="#333" stroke-width="4" /><path d="M18 5h5M20.500 2v6M18 10h5" stroke="#333" /></svg></button>
      <button aria-label="Fit" class="w-[50px] flex items-center gap-2"><svg class="w-6 h-6" viewBox="0 0 24 24"><circle cx="9" cy="9" r="8" fill="#e3f0f0" stroke="#777" stroke-width="1.300" /><path d="M5 5h8v8H5z" fill="#fff" stroke="#666" /><path d="M15 15l7 7" stroke="#333" stroke-width="4" /></svg><svg class="w-[9px] h-[6px]"><use href="#i-caret" /></svg></button>
      <button aria-label="Display settings" class="w-[47px] flex items-center gap-1"><svg class="w-6 h-6" viewBox="0 0 24 24"><path d="M1 1h22v17H1z" fill="#fff" stroke="#666" /><path d="M3 3h18v13H3z" fill="#8fb2e3" stroke="#4a6ea3" /><path d="M9 18h6v3h3v2H6v-2h3z" fill="#ddd" stroke="#666" /></svg><svg class="w-[9px] h-[6px]"><use href="#i-caret" /></svg></button>
      <button aria-label="Grid and snaps" class="w-[46px] flex items-center gap-1"><svg class="w-[22px] h-[22px]" viewBox="0 0 22 22"><path d="M0 0h22v22H0z" fill="#e6e7eb" /><path d="M0 12h22v10H0z" fill="#b9bcc6" /><path d="M.5 0v22M4 0v22M7.500 0v22M11 0v22M14.500 0v22M18 0v22M21.500 0v22M0 .5h22M0 4h22M0 7.500h22M0 11h22M0 14.500h22M0 18h22M0 21.500h22" stroke="#777" /></svg><svg class="w-[9px] h-[6px]"><use href="#i-caret" /></svg></button>
      <button aria-label="Viewports" class="flex items-center gap-1"><svg class="w-[22px] h-5" viewBox="0 0 22 20"><path d="M.5 .5h21v19H.5z" fill="#86aadd" stroke="#446" /><path d="M11 0v20M0 10h22" stroke="#446" stroke-width="2.500" /><path d="M11 0v20M0 10h22" stroke="#dce6f5" /></svg><svg class="w-[9px] h-[6px]"><use href="#i-caret" /></svg></button>
    </div>
  </main>

  <footer class="h-[31px] shrink-0 flex items-center gap-[14px] bg-[#f1f1f1] border-b-[3px] border-[#3c3a3e] pl-[9px] pt-[3px] text-[#555]">
    <button aria-label="Expand text commands"><svg class="w-[14px] h-[14px]"><use href="#i-plus" /></svg></button>
    <span>TEXT COMMANDS</span>
  </footer>

  <script>
    const nodes = [
      { name: 'Document Settings', icon: 'gear' },
      { name: 'Named Views', icon: 'folder' },
      { name: 'Origin', icon: 'folder', eye: 'off' },
    ];
    const parts = [
      '055-0680-engine-gearbox-case-pa...', '056-0680-engine-gearbox-case-pa...', '057-0680-engine-gearbox-case-pa...',
      '059-0680-interior-shifter-assembly:1', '062-0680-interior-shifter-plate:1', '063-0680-interior-shifter-stick:1',
      '089-0680-engine-velocity-stacks:1', '089-0680-engine-velocity-stacks-v...', '090-0680-engine-carburetors:1',
      '091-0680-engine-intake-manifold:1', '092-0680-engine-camshift-covers:1', '093-0680-engine-camshaft:1',
      '095-0680-engine-block:1', '096-0680-engine-starter-motor:1', '097-0680-engine-oil-sump:1',
      '098-0680-engine-timing-cover:1', '099-0680-engine-parts:1', '100-0680-engine-water-rails-1:1',
      '101-0680-engine-water-rails-2:1', '102-0680-engine-bell-housing:1', '103-0680-oil-filler-tubes:1',
      '104-0680-engine-fuel-pump:1', '105-0680-engine-dynamo:1', '107-0680-engine-throttle-control-lir...',
      '108-0680-engine-throttle-control-lir...', '109-0680-engine-distributors:1',
    ];
    const visible = ['057', '096', '097'];
    parts.forEach((name) => nodes.push({ name, icon: 'cube', eye: visible.includes(name.slice(0, 3)) ? 'on' : 'off' }));

    const icons = {
      gear: '<svg class="w-6 h-6"><use href="#i-gear" /></svg>',
      folder: '<svg class="w-6 h-[17px]"><use href="#i-folder" /></svg>',
      cube: '<svg class="w-5 h-5 mx-[2px]"><use href="#i-cube" /></svg>',
    };
    const eyes = {
      on: '<button aria-label="Hide" class="mr-[14px]"><svg class="w-6 h-[14px]"><use href="#i-eye" /></svg></button>',
      off: '<button aria-label="Show" class="mr-[14px]"><svg class="w-6 h-[18px]"><use href="#i-eye-off" /></svg></button>',
    };

    document.getElementById('tree').insertAdjacentHTML('beforeend', nodes.map((n) => `
      <li class="h-9 flex items-center">
        <button aria-label="Expand" class="ml-10"><svg class="w-[10px] h-[14px]"><use href="#i-tri" /></svg></button>
        <div class="ml-4 h-[30px] flex items-center bg-[#f1f1f1] pl-1 pr-[18px] whitespace-nowrap">
          ${n.eye ? eyes[n.eye] : ''}${icons[n.icon]}<span class="ml-[22px]">${n.name}</span>
        </div>
      </li>`).join(''));

    // ground plane: world (x, y) in mm to view coordinates
    const X0 = -1550, X1 = 1450, Y0 = -2100, Y1 = 950;
    function project(x, y) {
      const w = 1 - 0.00014386 * x + 0.000144 * y;
      return [(2182.4 + 0.28129 * x + 0.7755 * y) / w, (824.1 + 0.18806 * x - 0.18787 * y) / w];
    }
    const seg = (a, b) => `M${project(...a).map((v) => v.toFixed(1))}L${project(...b).map((v) => v.toFixed(1))}`;

    let minor = '', major = '';
    for (let x = X0 + 50; x < X1; x += 50) {
      if (x % 250) minor += seg([x, Y0], [x, Y1]);
      else if (x) major += seg([x, Y0], [x, Y1]);
    }
    for (let y = Y0 + 50; y < Y1; y += 50) {
      if (y % 250) minor += seg([X0, y], [X1, y]);
      else if (y) major += seg([X0, y], [X1, y]);
    }
    const border = seg([X0, Y0], [X0, Y1]) + seg([X0, Y1], [X1, Y1]) + seg([X1, Y1], [X1, Y0]) + seg([X1, Y0], [X0, Y0]);
    document.getElementById('grid').innerHTML = `
      <g fill="none">
        <path d="${minor}" stroke="#efefef" />
        <path d="${major}" stroke="#cccccc" />
        <path d="${border}" stroke="#777" stroke-width="1.200" />
        <path d="${seg([X0, 0], [X1, 0])}" stroke="#ff8080" />
        <path d="${seg([0, Y0], [0, Y1])}" stroke="#78ff78" />
      </g>`;

    // labels lie flat on the plane, so each takes the plane's local axes
    function label(text, x, y, alongY) {
      const p = project(x, y), px = project(x + 1, y), py = project(x, y + 1);
      const u = [px[0] - p[0], px[1] - p[1]], v = [py[0] - p[0], py[1] - p[1]];
      const m = alongY ? [...v, ...u, ...p] : [...u, -v[0], -v[1], ...p];
      return `<text font-size="27" transform="matrix(${m.map((n) => n.toFixed(4)).join(' ')})">${text}</text>`;
    }
    let labels = '';
    for (let y = 0; y <= 450; y += 50) labels += label(y, X1 + 6, y - 10, false);
    for (let x = 600; x <= 1500; x += 50) labels += label(x, -x + 10, Y0 + 4, true);
    document.getElementById('labels').innerHTML = labels;

    // fins on the oil pan
    let ribs = '';
    for (let i = 0; i < 9; i++) {
      const y = 1092 + i * 14;
      ribs += `M890 ${y}L1335 ${770 + i * 11}M890 ${y}l14 5-14 9`;
    }
    for (let i = 0; i < 8; i++) {
      const y = 1348 + i * 13;
      ribs += `M540 ${y}L677 ${1246 + i * 15}M540 ${y}l16 4-16 9`;
    }
    document.getElementById('ribs').innerHTML = `<path d="${ribs}M677 1245v105M888 1090v130" />`;
  </script>
</body>
</html>
